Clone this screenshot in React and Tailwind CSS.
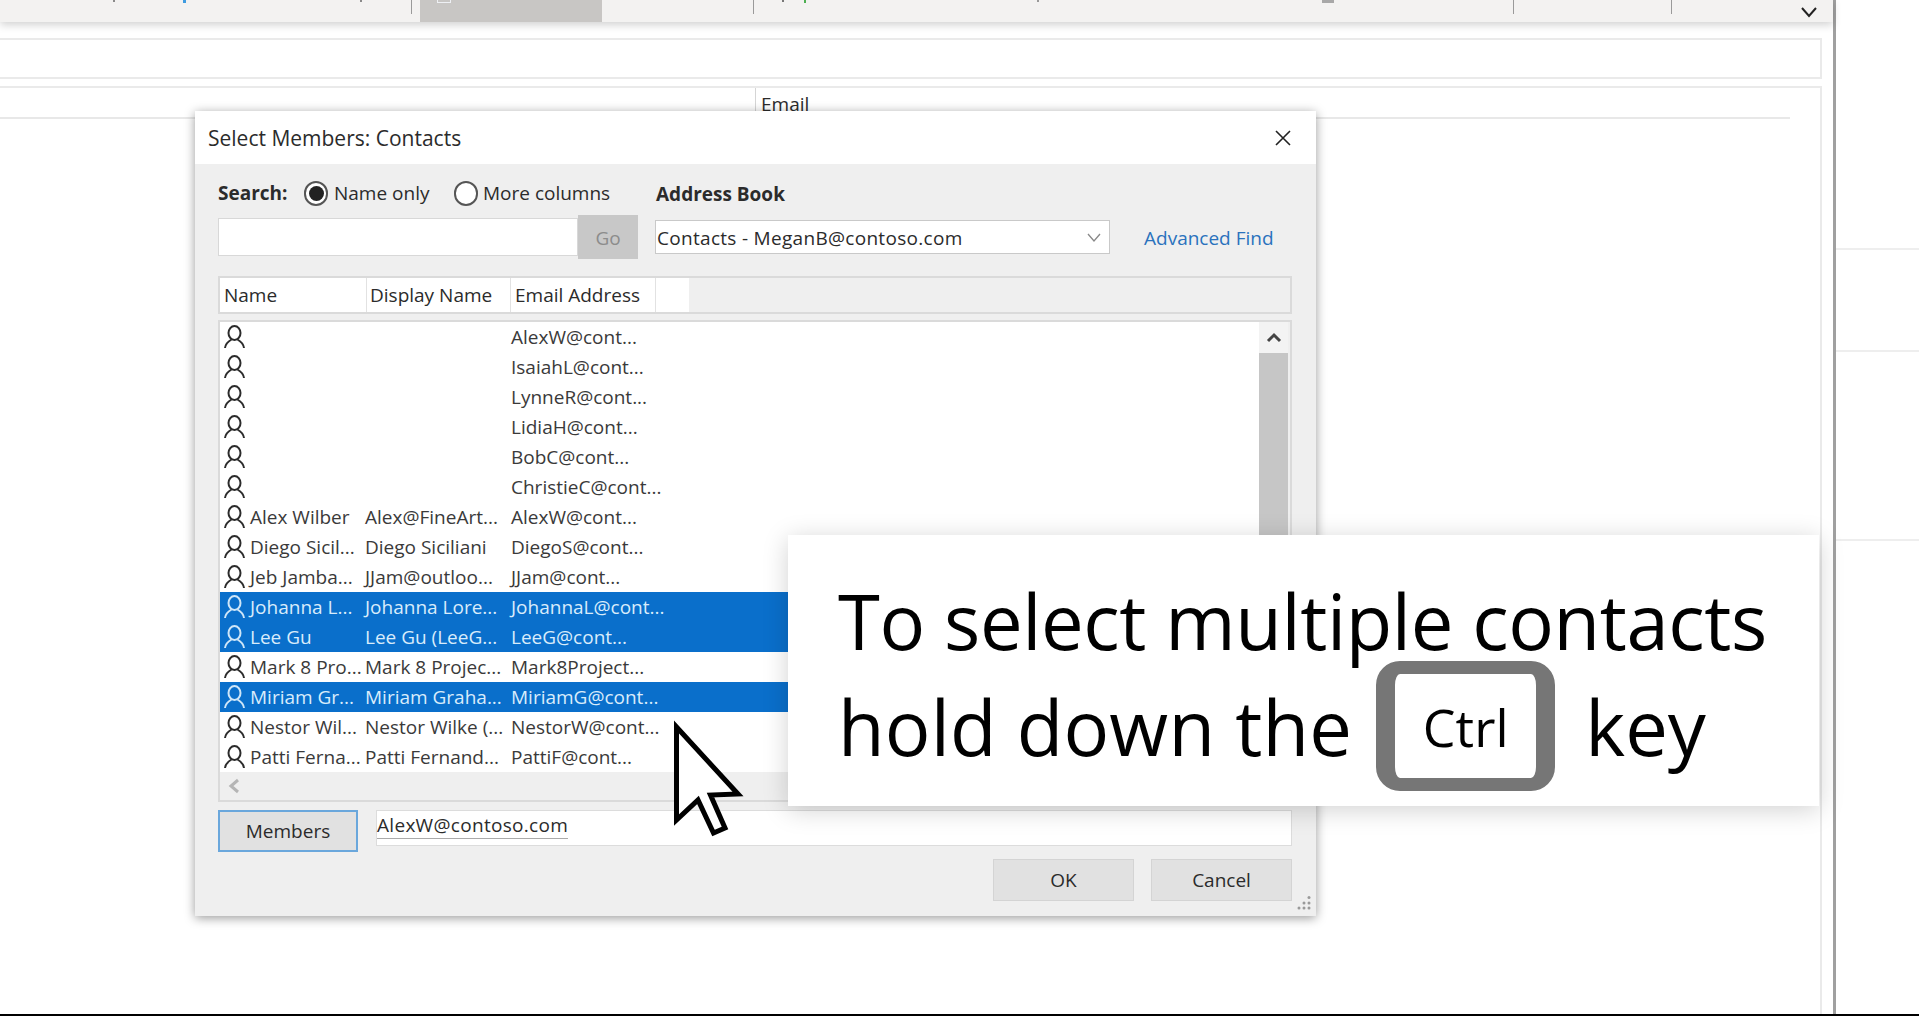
import React from 'react';

const font = { fontFamily: '"Open Sans", "Noto Sans", sans-serif' };

const contacts = [
  { email: 'AlexW@cont...' },
  { email: 'IsaiahL@cont...' },
  { email: 'LynneR@cont...' },
  { email: 'LidiaH@cont...' },
  { email: 'BobC@cont...' },
  { email: 'ChristieC@cont...' },
  { name: 'Alex Wilber', display: 'Alex@FineArt...', email: 'AlexW@cont...' },
  { name: 'Diego Sicil...', display: 'Diego Siciliani', email: 'DiegoS@cont...' },
  { name: 'Jeb Jamba...', display: 'JJam@outloo...', email: 'JJam@cont...' },
  { name: 'Johanna L...', display: 'Johanna Lore...', email: 'JohannaL@cont...', selected: true },
  { name: 'Lee Gu', display: 'Lee Gu (LeeG...', email: 'LeeG@cont...', selected: true },
  { name: 'Mark 8 Pro...', display: 'Mark 8 Projec...', email: 'Mark8Project...' },
  { name: 'Miriam Gr...', display: 'Miriam Graha...', email: 'MiriamG@cont...', selected: true },
  { name: 'Nestor Wil...', display: 'Nestor Wilke (...', email: 'NestorW@cont...' },
  { name: 'Patti Ferna...', display: 'Patti Fernand...', email: 'PattiF@cont...' },
];

const PersonIcon = ({ color }) => (
  <svg width="21" height="24" viewBox="0 0 21 24" fill="none" stroke={color} strokeWidth="2">
    <ellipse cx="10.5" cy="8" rx="6" ry="7" />
    <path d="M1 23 C1.5 19 4 16.5 7.5 14.5 M20 23 C19.5 19 17 16.5 13.5 14.5" />
  </svg>
);

const Radio = ({ checked }) => (
  <span className="flex h-[25px] w-[24px] shrink-0 items-center justify-center rounded-full border-2 border-[#555] bg-white">
    {checked && <span className="h-[15px] w-[15px] rounded-full bg-[#222]" />}
  </span>
);

const ContactRow = ({ contact }) => (
  <div
    className={`flex h-[30px] items-center whitespace-nowrap text-[19px] ${
      contact.selected ? 'bg-[#0a6fcb] text-[#d9ecfb]' : 'text-[#3a3a3a]'
    }`}
  >
    <span className="flex w-[25px] shrink-0 justify-end">
      <PersonIcon color={contact.selected ? '#cfe6f8' : '#2b2b2b'} />
    </span>
    <span className="ml-[5px] w-[115px] shrink-0">{contact.name}</span>
    <span className="w-[146px] shrink-0">{contact.display}</span>
    <span>{contact.email}</span>
  </div>
);

const App = () => {
  return (
    <div style={font} className="relative flex h-[1016px] w-[1919px] flex-col overflow-hidden bg-white text-[#2b2b2b]">
      {/* app window */}
      <div className="flex h-[1014px] w-full">
        <div className="flex w-[1836px] shrink-0 flex-col border-r-[3px] border-[#a0a0a0]">
          {/* ribbon */}
          <div className="relative flex h-[22px] items-start bg-[#f3f2f1] shadow-[0_3px_8px_rgba(0,0,0,0.18)]">
            <span className="ml-[411px] h-[14px] w-px bg-[#9a9a9a]" />
            <span className="ml-[8px] h-[22px] w-[182px] bg-[#c8c6c4]" />
            <span className="ml-[151px] h-[14px] w-px bg-[#9a9a9a]" />
            <span className="ml-[759px] h-[14px] w-px bg-[#9a9a9a]" />
            <span className="ml-[157px] h-[14px] w-px bg-[#9a9a9a]" />
            <svg className="ml-[128px] mt-[6px]" width="18" height="12" viewBox="0 0 18 12" fill="none" stroke="#222" strokeWidth="2">
              <path d="M2 2 L9 10 L16 2" />
            </svg>
            {/* bottoms of the ribbon icons, cut off by the crop */}
            <span className="absolute left-[113px] top-0 h-[2px] w-[2px] bg-[#8a8a8a]" />
            <span className="absolute left-[183px] top-0 h-[3px] w-[3px] bg-[#3d9be0]" />
            <span className="absolute left-[360px] top-0 h-[2px] w-[2px] bg-[#8a8a8a]" />
            <span className="absolute left-[437px] top-0 h-[3px] w-[14px] border-x border-b border-[#eef0f4]" />
            <span className="absolute left-[782px] top-0 h-[2px] w-[2px] bg-[#777]" />
            <span className="absolute left-[804px] top-0 h-[3px] w-[2px] bg-[#4caf50]" />
            <span className="absolute left-[1037px] top-0 h-[2px] w-[2px] bg-[#999]" />
            <span className="absolute left-[1322px] top-0 h-[3px] w-[12px] bg-[#a8a8a8]" />
          </div>
          <div className="mr-[11px] mt-[16px] h-[41px] border-2 border-l-0 border-[#eaeaea]" />
          <div className="mr-[11px] mt-[7px] flex-1 border-2 border-b-0 border-l-0 border-[#eaeaea]">
            <div className="mr-[30px] flex h-[31px] border-b-2 border-[#e8e8e8]">
              <span className="ml-[755px] h-[31px] border-l border-[#d5d5d5] pl-[5px] pt-[4px] text-[19px] leading-[24px]">Email</span>
            </div>
          </div>
        </div>
        {/* reading pane edge */}
        <div className="flex-1">
          <div className="mt-[248px] h-[104px] border-y-2 border-[#eeeeee]" />
          <div className="mt-[187px] h-[2px] bg-[#eeeeee]" />
        </div>
      </div>
      <div className="h-[2px] bg-black" />

      {/* dialog */}
      <div className="absolute left-[195px] top-[111px] flex h-[805px] w-[1121px] flex-col bg-[#efefef] shadow-[0_2px_10px_rgba(0,0,0,0.4)]">
        <div className="flex h-[53px] shrink-0 items-center justify-between bg-white pl-[13px] pr-[25px] text-[21px]">
          <span className="pt-[2px]">Select Members: Contacts</span>
          <svg width="16" height="16" viewBox="0 0 16 16" fill="none" stroke="#222" strokeWidth="1.6">
            <path d="M1 1 L15 15 M15 1 L1 15" />
          </svg>
        </div>
        <div className="flex flex-col pl-[23px] pr-[24px]">
          {/* search row */}
          <div className="mt-[16px] flex h-[26px] items-center whitespace-nowrap text-[19px]">
            <span className="w-[86px] shrink-0 pt-[1px] font-bold">Search:</span>
            <Radio checked />
            <span className="ml-[6px] w-[120px] shrink-0 pt-[1px]">Name only</span>
            <Radio />
            <span className="ml-[5px] w-[173px] shrink-0 pt-[1px]">More columns</span>
            <span className="pt-[3px] font-bold">Address Book</span>
          </div>
          <div className="mt-[9px] flex h-[44px] items-center whitespace-nowrap">
            <div className="h-[38px] w-[360px] border border-[#d8d8d8] bg-white" />
            <div className="flex h-[44px] w-[60px] items-center justify-center bg-[#c8c8c8] pt-[2px] text-[19px] text-[#8c8c8c]">Go</div>
            <div className="ml-[17px] flex h-[34px] w-[455px] items-center justify-between border border-[#c9c9c9] bg-white pl-[1px] pr-[8px] text-[19px] tracking-[0.3px]">
              <span className="pt-[2px]">Contacts - MeganB@contoso.com</span>
              <svg width="14" height="9" viewBox="0 0 14 9" fill="none" stroke="#888" strokeWidth="1.3">
                <path d="M1 1 L7 8 L13 1" />
              </svg>
            </div>
            <span className="ml-[34px] pt-[2px] text-[19px] text-[#2a72bd]">Advanced Find</span>
          </div>
          {/* column header */}
          <div className="mt-[17px] flex h-[38px] border-2 border-[#dadada] bg-[#efefef] text-[19px]">
            <span className="flex w-[146px] items-center bg-white pl-[4px] pt-[1px]">Name</span>
            <span className="flex w-[144px] items-center border-l border-[#e2e2e2] bg-white pl-[3px] pt-[1px]">Display Name</span>
            <span className="flex w-[145px] items-center border-l border-[#e2e2e2] bg-white pl-[4px] pt-[1px]">Email Address</span>
            <span className="w-[34px] border-l border-[#e2e2e2] bg-white" />
          </div>
          {/* contact list */}
          <div className="mt-[6px] flex h-[482px] flex-col border-2 border-[#dadada]">
            <div className="flex h-[450px] bg-white">
              <div className="flex-1">
                {contacts.map((c) => (
                  <ContactRow key={c.email + (c.name || '')} contact={c} />
                ))}
              </div>
              <div className="flex w-[31px] flex-col bg-[#efefef] pr-[2px]">
                <div className="flex h-[31px] items-center justify-center bg-[#f3f3f3]">
                  <svg width="16" height="11" viewBox="0 0 16 11" fill="none" stroke="#444" strokeWidth="3">
                    <path d="M2 9 L8 3 L14 9" />
                  </svg>
                </div>
                <div className="h-[190px] bg-[#c6c6c6]" />
              </div>
            </div>
            <div className="flex flex-1 items-center bg-[#efefef] pl-[8px]">
              <svg width="12" height="16" viewBox="0 0 12 16" fill="none" stroke="#b5b5b5" strokeWidth="3">
                <path d="M10 2 L3 8 L10 14" />
              </svg>
            </div>
          </div>
          {/* members */}
          <div className="mt-[8px] flex items-start">
            <div className="flex h-[42px] w-[140px] items-center justify-center border-2 border-[#6aa7dc] bg-[#e1e1e1] text-[19px]">Members</div>
            <div className="ml-[18px] h-[36px] flex-1 border border-[#dcdcdc] bg-white text-[19px] leading-[28px] tracking-[0.3px]">
              <span className="border-b border-[#aaaaaa]">AlexW@contoso.com</span>
            </div>
          </div>
          {/* buttons */}
          <div className="mt-[7px] flex justify-end gap-[17px]">
            <div className="flex h-[42px] w-[141px] items-center justify-center border border-[#d4d4d4] bg-[#e1e1e1] pt-[1px] text-[19px]">OK</div>
            <div className="flex h-[42px] w-[141px] items-center justify-center border border-[#d4d4d4] bg-[#e1e1e1] pt-[1px] text-[19px]">Cancel</div>
          </div>
        </div>
      </div>

      {/* cursor */}
      <svg className="absolute left-[672px] top-[720px]" width="76" height="120" viewBox="0 0 76 120" fill="#fff" stroke="#000" strokeWidth="5">
        <path d="M4.5 7 L4.5 100 L26 80 L41.5 113 L53 108 L38.5 75 L66 74 Z" />
      </svg>

      {/* callout */}
      <div className="absolute left-[788px] top-[535px] flex h-[271px] w-[1031px] flex-col bg-white pl-[50px] text-[76px] leading-[105px] text-black shadow-[0_4px_24px_rgba(0,0,0,0.18)]">
        <div className="mt-[33px] h-[93px] tracking-[-0.4px]">To select multiple contacts</div>
        <div className="flex items-center">
          <span className="tracking-[0.2px]">hold down the</span>
          <span className="ml-[24px] flex h-[130px] w-[179px] items-center justify-center rounded-[24px] border-x-[19px] border-y-[13px] border-[#767676] text-[52px]">Ctrl</span>
          <span className="ml-[30px]">key</span>
        </div>
      </div>

      {/* resize grip */}
      <svg className="absolute left-[1296px] top-[895px]" width="16" height="16" viewBox="0 0 16 16" fill="#9a9a9a">
        <circle cx="13" cy="2.5" r="1.5" />
        <circle cx="8" cy="8" r="1.5" />
        <circle cx="13" cy="8" r="1.5" />
        <circle cx="3" cy="13" r="1.5" />
        <circle cx="8" cy="13" r="1.5" />
        <circle cx="13" cy="13" r="1.5" />
      </svg>
    </div>
  );
};

export default App;
